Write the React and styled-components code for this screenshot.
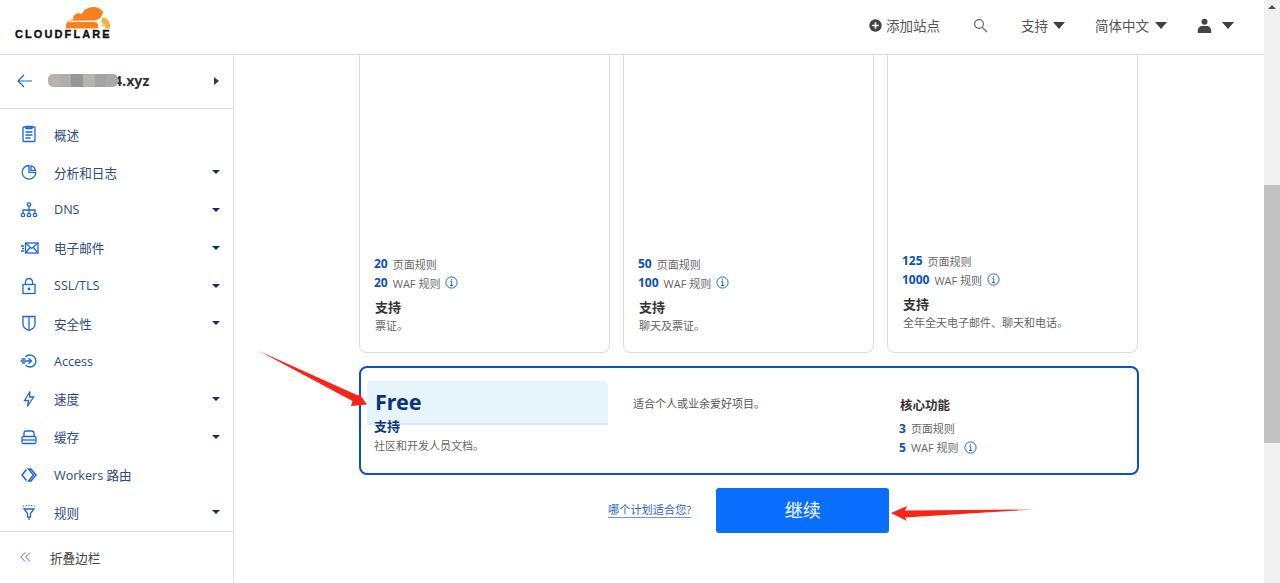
import React from 'react';
import styled, { createGlobalStyle } from 'styled-components';

const GlobalStyle = createGlobalStyle`
  html, body, #root {
    height: 100%;
    margin: 0;
  }
  body {
    overflow: hidden;
    background: #fff;
    font-family: "Open Sans", "Noto Sans CJK SC", sans-serif;
    color: #36393a;
  }
`;

const Page = styled.div`
  display: flex;
  height: 583px;
  position: relative;
  overflow: hidden;
`;

const Content = styled.div`
  flex: 1;
  min-width: 0;
  display: flex;
  flex-direction: column;
`;

const Scrollbar = styled.div`
  width: 16px;
  background: #f1f1f1;
  padding-top: 185px;
  position: relative;

  &::before {
    content: '';
    position: absolute;
    top: 5px;
    left: 4px;
    border-left: 4px solid transparent;
    border-right: 4px solid transparent;
    border-bottom: 4px solid #505050;
  }

  div {
    height: 258px;
    background: #c1c1c1;
  }
`;

const Header = styled.header`
  height: 54px;
  flex: none;
  border-bottom: 1px solid #e2e2e2;
  display: flex;
  align-items: center;
  justify-content: space-between;
  padding: 0 30px 0 15px;
`;

const Logo = styled.div`
  display: flex;
  flex-direction: column;
  align-items: flex-start;
  width: 96px;
  margin-top: -8px;

  svg {
    margin-left: 50px;
    margin-bottom: 0;
  }

  span {
    font-family: "Liberation Sans", sans-serif;
    font-size: 11px;
    line-height: 11px;
    font-weight: 700;
    letter-spacing: 2.1px;
    color: #111;
    white-space: nowrap;
    -webkit-text-stroke: 0.35px #111;
  }
`;

const HeaderNav = styled.nav`
  display: flex;
  align-items: center;
  font-size: 13.5px;
  color: #555;
  padding-bottom: 4px;
`;

const HeaderItem = styled.div`
  display: flex;
  align-items: center;
  gap: ${({ $gap }) => $gap ?? 4}px;
  margin-left: ${({ $left }) => $left ?? 0}px;
  white-space: nowrap;
`;

const Caret = styled.i`
  display: block;
  border-left: 6px solid transparent;
  border-right: 6px solid transparent;
  border-top: 7px solid #404040;
`;

const Body = styled.div`
  flex: 1;
  display: flex;
  min-height: 0;
`;

const Sidebar = styled.aside`
  width: 234px;
  flex: none;
  border-right: 1px solid #e2e2e2;
  box-sizing: border-box;
  display: flex;
  flex-direction: column;
`;

const DomainRow = styled.div`
  height: 54px;
  flex: none;
  box-sizing: border-box;
  border-bottom: 1px solid #e2e2e2;
  display: flex;
  align-items: center;
  padding: 0 14px 2px 17px;
`;

const Blurred = styled.div`
  display: flex;
  width: 70px;
  height: 13px;
  margin-left: 15px;
  margin-right: -4px;
  border-radius: 5px;
  overflow: hidden;
  filter: blur(0.7px);
  position: relative;
  z-index: 1;
`;

const BlurCell = styled.b`
  flex: 1;
  background: ${({ $c }) => $c};
`;

const DomainName = styled.span`
  flex: 1;
  font-size: 14.2px;
  font-weight: 700;
  color: #333;
`;

const SmallArrow = styled.i`
  display: block;
  border-top: 4px solid transparent;
  border-bottom: 4px solid transparent;
  border-left: 5px solid #3a3a3a;
`;

const NavList = styled.nav`
  flex: 1;
  padding-top: 6.5px;
`;

const NavItem = styled.div`
  height: 37.8px;
  display: flex;
  align-items: center;
  padding: 0 13px 0 20px;
  font-size: 12.6px;
  color: #2e4a7d;

  svg {
    flex: none;
  }
`;

const NavIconSlot = styled.span`
  width: 34px;
  flex: none;
  display: flex;
  justify-content: flex-start;
`;

const NavLabel = styled.span`
  flex: 1;
  white-space: nowrap;
`;

const NavCaret = styled.i`
  display: block;
  border-left: 4px solid transparent;
  border-right: 4px solid transparent;
  border-top: 4px solid #0f2d66;
`;

const CollapseRow = styled.div`
  height: 52px;
  flex: none;
  box-sizing: border-box;
  border-top: 1px solid #e2e2e2;
  display: flex;
  align-items: center;
  padding: 0 0 1px 20px;
  gap: 19px;
  font-size: 12.6px;
  color: #444;
`;

const Main = styled.main`
  flex: 1;
  padding-left: 125px;
  display: flex;
  flex-direction: column;
`;

const Plans = styled.div`
  display: grid;
  grid-template-columns: repeat(3, 251px);
  gap: 13px;
  height: 298px;
  flex: none;
`;

const PlanCard = styled.div`
  box-sizing: border-box;
  border: 1px solid #dcdcdc;
  border-top: none;
  border-radius: 0 0 8px 8px;
  padding: 0 15px ${({ $bottom }) => $bottom}px;
  display: flex;
  flex-direction: column;
  justify-content: flex-end;
`;

const Limit = styled.div`
  display: flex;
  align-items: center;
  height: 19px;
  font-size: 11px;
  color: #666;
  white-space: nowrap;

  b {
    color: #0b4fb5;
    font-size: 12px;
    font-weight: 700;
    margin: 0 5px 0 -1px;
  }

  svg {
    margin-left: 5px;
  }
`;

const SupportTitle = styled.div`
  font-size: 13px;
  line-height: 18px;
  font-weight: 700;
  color: #333;
  margin-top: 6px;
`;

const SupportText = styled.div`
  font-size: 11px;
  line-height: 16px;
  color: #666;
  margin-top: 2px;
`;

const FreeCard = styled.div`
  box-sizing: border-box;
  width: 780px;
  height: 109px;
  flex: none;
  margin-top: 12.5px;
  border: 2px solid #0a52bf;
  border-radius: 8px;
  padding: 13px 0 0 6px;
  display: grid;
  grid-template-columns: 241px 267px 1fr;
  column-gap: 25px;
`;

const FreeHead = styled.div`
  height: 44px;
  box-sizing: border-box;
  background: #e6f4fb;
  border-bottom: 2px solid #dbeafa;
  border-radius: 4px 4px 0 0;
  padding-left: 8px;
  font-size: 21.5px;
  line-height: 42px;
  font-weight: 700;
  color: #0d3478;
  font-family: "Noto Sans", "Noto Sans CJK SC", sans-serif;
`;

const FreeBlurb = styled.div`
  font-size: 11px;
  line-height: 16px;
  color: #555;
  padding-top: 15px;
`;

const FreeSupport = styled.div`
  padding-left: 7px;

  ${SupportTitle} {
    color: #0d3478;
    margin-top: -8px;
  }

  ${SupportText} {
    margin-top: 3px;
  }
`;

const FreeCore = styled.div`
  padding-top: 16px;
  margin-left: -25px;
  display: flex;
  flex-direction: column;
`;

const CoreTitle = styled.div`
  font-size: 12.5px;
  line-height: 18px;
  font-weight: 700;
  color: #333;
  margin-bottom: 4px;
`;

const Actions = styled.div`
  display: flex;
  align-items: center;
  margin-top: 13px;
  padding-left: 249px;
  gap: 25px;
`;

const HelpLink = styled.a`
  font-size: 11.2px;
  color: #2c64b8;
  text-decoration: none;
  border-bottom: 1px solid #6f97d6;
  line-height: 14px;
  white-space: nowrap;
  margin-top: 1px;
`;

const ContinueButton = styled.button`
  width: 173px;
  height: 45px;
  background: #0a6eff;
  border: none;
  border-radius: 3px;
  color: #fff;
  font-family: inherit;
  font-size: 18px;
  padding: 0 0 3px;
`;

const RedArrow = styled.svg`
  position: absolute;
  left: 0;
  top: 0;
  pointer-events: none;
`;

const Info = () => (
  <svg width="13" height="13" viewBox="0 0 13 13" fill="none" stroke="#1f66c9" strokeWidth="1">
    <circle cx="6.5" cy="6.5" r="5.6" />
    <path d="M5.3 5.6h1.4v3.8M5 9.5h3.2M6.5 3.2v1.3" />
  </svg>
);

const CloudLogo = () => (
  <svg width="46" height="22" viewBox="3.5 0 42.5 21.5" preserveAspectRatio="none">
    <path
      fill="#f6821f"
      d="M33.5 21 34 19.4c.4-1.3.2-2.5-.5-3.4-.6-.8-1.7-1.3-3-1.4L6 14.3c-.2 0-.3-.1-.4-.2-.1-.1-.1-.2 0-.4.1-.2.2-.3.4-.3l24.7-.3c2.9-.1 6-2.5 7.1-5.4l.9-2.4c0-.1.1-.2 0-.3C37.1 1.9 33.3 0 29.5 0c-4.8 0-9 2.9-10.5 7.2-1-.7-2.2-1.1-3.6-1-2.3.2-4.2 2.1-4.4 4.4-.1.6 0 1.2.1 1.7C7.4 12.4 4.2 15.6 4.2 19.6c0 .4 0 .7.1 1.1 0 .2.2.3.3.3h28.5c.2 0 .3-.1.4 0z"
    />
    <path
      fill="#fbad41"
      d="M38.5 10c-.1 0-.3 0-.4 0-.1 0-.2.1-.2.2l-.6 2.1c-.4 1.3-.2 2.5.5 3.4.6.8 1.7 1.3 3 1.4l-3.6.3c-.2 0-.3.1-.4.2-.1.1-.1.3 0 .4.1.2.2.3.4.3l3.8.3c-.6 1.1-.5 1.7-.8 2.4h4.5c.1 0 .3-.1.3-.2.2-.7.3-1.4.3-2.2 0-4.6-3.7-8.4-6.8-8.4z"
    />
  </svg>
);

const PlusCircle = () => (
  <svg width="13" height="13" viewBox="0 0 13 13">
    <circle cx="6.5" cy="6.5" r="6.2" fill="#444" />
    <path d="M6.5 3.2v6.6M3.2 6.5h6.6" stroke="#fff" strokeWidth="1.6" />
  </svg>
);

const SearchIcon = () => (
  <svg width="15" height="15" viewBox="0 0 15 15" fill="none" stroke="#666" strokeWidth="1.2">
    <circle cx="6" cy="6" r="4.4" />
    <path d="M9.3 9.3 14 14" />
  </svg>
);

const UserIcon = () => (
  <svg width="15" height="15" viewBox="0 0 15 15" fill="#444">
    <circle cx="7.5" cy="3.7" r="3" />
    <path d="M.8 15v-2.5C.8 9.8 3 8 5.3 8h4.400c2.300 0 4.500 1.800 4.500 4.500V15z" />
  </svg>
);

const BackIcon = () => (
  <svg width="16" height="14" viewBox="0 0 16 14" fill="none" stroke="#1d62cc" strokeWidth="1.2">
    <path d="M15 7H1M7 1 1 7l6 6" />
  </svg>
);

const iconProps = { width: 18, height: 18, viewBox: '0 0 18 18', fill: 'none', stroke: '#1f66d1', strokeWidth: 1.3 };

const icons = {
  overview: (
    <svg {...iconProps}>
      <rect x="3" y="2" width="12" height="14.5" rx="1" />
      <path d="M6 1.500h6v2H6zM5.500 7h7M5.500 10h7M5.500 13h5" />
    </svg>
  ),
  analytics: (
    <svg {...iconProps}>
      <path d="M9 2.500A6.800 6.800 0 1 0 15.800 9.300H9z" />
      <path d="M11 2.800A6 6 0 0 1 15.500 7.300H11z" />
    </svg>
  ),
  dns: (
    <svg {...iconProps}>
      <circle cx="9" cy="3.5" r="1.7" />
      <circle cx="3" cy="14" r="1.7" />
      <circle cx="9" cy="14" r="1.7" />
      <circle cx="15" cy="14" r="1.7" />
      <path d="M9 5.200v7M3 12.300V9h12v3.300" />
    </svg>
  ),
  email: (
    <svg {...iconProps} width="19">
      <rect x="5" y="4" width="12.5" height="10" />
      <path d="m5 4 6.250 5.500L17.500 4M5 14l4.500-5.500M17.500 14 13 8.500M.5 7H3.500M1.500 9.500h2M.5 12h3" />
    </svg>
  ),
  lock: (
    <svg {...iconProps}>
      <rect x="3" y="7.5" width="12" height="9" />
      <path d="M5.500 7.500V5a3.500 3.500 0 0 1 7 0v2.500" />
      <circle cx="9" cy="12" r="0.8" fill="#1f66d1" />
    </svg>
  ),
  shield: (
    <svg {...iconProps}>
      <path d="M3 2.500h12V10c0 3-3 5.500-6 6.500-3-1-6-3.500-6-6.500z" />
      <path d="M9 2.500v14" />
    </svg>
  ),
  access: (
    <svg {...iconProps}>
      <path d="M5.500 5A6 6 0 1 1 5.500 13" />
      <path d="M.5 9h11M8.500 6.300 11.500 9 8.500 11.700M1.500 7h4M2 11h3" />
    </svg>
  ),
  speed: (
    <svg {...iconProps}>
      <path d="M10 1.500 4.500 10.500h4L7.500 16.500l6-9.500H9.500z" />
    </svg>
  ),
  cache: (
    <svg {...iconProps}>
      <path d="M4 8.500V5.200C4 4 5 3 6.200 3h5.600C13 3 14 4 14 5.200v3.300" />
      <rect x="2" y="8.5" width="14" height="7" rx="1.5" />
      <path d="M2 12h14" />
    </svg>
  ),
  workers: (
    <svg {...iconProps} strokeWidth="1.5">
      <path d="M6.500 3.500 2 9l4.500 5.500M8.500 3h2.500L16 9l-5 6H8.500l5-6z" />
    </svg>
  ),
  rules: (
    <svg {...iconProps}>
      <path d="M4 6h10l-3.500 4.500V14h-3v-3.500z" />
      <path d="M3.500 2.500v1M6.300 2v1M9 2v1M11.700 2v1M14.500 2.500v1M9 15v2" />
    </svg>
  ),
};

const navItems = [
  { icon: 'overview', label: '概述' },
  { icon: 'analytics', label: '分析和日志', caret: true },
  { icon: 'dns', label: 'DNS', caret: true },
  { icon: 'email', label: '电子邮件', caret: true },
  { icon: 'lock', label: 'SSL/TLS', caret: true },
  { icon: 'shield', label: '安全性', caret: true },
  { icon: 'access', label: 'Access' },
  { icon: 'speed', label: '速度', caret: true },
  { icon: 'cache', label: '缓存', caret: true },
  { icon: 'workers', label: 'Workers 路由' },
  { icon: 'rules', label: '规则', caret: true },
];

const plans = [
  { pages: 20, waf: 20, support: '票证。', bottom: 18 },
  { pages: 50, waf: 100, support: '聊天及票证。', bottom: 18 },
  { pages: 125, waf: 1000, support: '全年全天电子邮件、聊天和电话。', bottom: 21 },
];

const blur = ['#b7b2ae', '#aeaeae', '#979797', '#b6b4b0', '#a3a3a3', '#a9a9a9'];

export default function App() {
  return (
    <Page>
      <GlobalStyle />
      <Content>
        <Header>
          <Logo>
            <CloudLogo />
            <span>CLOUDFLARE</span>
          </Logo>
          <HeaderNav>
            <HeaderItem>
              <PlusCircle />
              添加站点
            </HeaderItem>
            <HeaderItem $left={33}>
              <SearchIcon />
            </HeaderItem>
            <HeaderItem $left={33} $gap={5}>
              支持
              <Caret />
            </HeaderItem>
            <HeaderItem $left={30} $gap={6}>
              简体中文
              <Caret />
            </HeaderItem>
            <HeaderItem $left={30} $gap={10}>
              <UserIcon />
              <Caret />
            </HeaderItem>
          </HeaderNav>
        </Header>
        <Body>
          <Sidebar>
            <DomainRow>
              <BackIcon />
              <Blurred>
                {blur.map((c, i) => (
                  <BlurCell key={i} $c={c} />
                ))}
              </Blurred>
              <DomainName>4.xyz</DomainName>
              <SmallArrow />
            </DomainRow>
            <NavList>
              {navItems.map((item) => (
                <NavItem key={item.label}>
                  <NavIconSlot>{icons[item.icon]}</NavIconSlot>
                  <NavLabel>{item.label}</NavLabel>
                  {item.caret && <NavCaret />}
                </NavItem>
              ))}
            </NavList>
            <CollapseRow>
              <svg width="11" height="10" viewBox="0 0 11 10" fill="none" stroke="#3d74cf" strokeWidth="1">
                <path d="M5 .5.800 5 5 9.500M10 .5 5.800 5 10 9.500" />
              </svg>
              折叠边栏
            </CollapseRow>
          </Sidebar>
          <Main>
            <Plans>
              {plans.map((plan) => (
                <PlanCard key={plan.pages} $bottom={plan.bottom}>
                  <Limit>
                    <b>{plan.pages}</b>页面规则
                  </Limit>
                  <Limit>
                    <b>{plan.waf}</b>WAF 规则
                    <Info />
                  </Limit>
                  <SupportTitle>支持</SupportTitle>
                  <SupportText>{plan.support}</SupportText>
                </PlanCard>
              ))}
            </Plans>
            <FreeCard>
              <div>
                <FreeHead>Free</FreeHead>
                <FreeSupport>
                  <SupportTitle>支持</SupportTitle>
                  <SupportText>社区和开发人员文档。</SupportText>
                </FreeSupport>
              </div>
              <FreeBlurb>适合个人或业余爱好项目。</FreeBlurb>
              <FreeCore>
                <CoreTitle>核心功能</CoreTitle>
                <Limit>
                  <b>3</b>页面规则
                </Limit>
                <Limit>
                  <b>5</b>WAF 规则
                  <Info />
                </Limit>
              </FreeCore>
            </FreeCard>
            <Actions>
              <HelpLink>哪个计划适合您?</HelpLink>
              <ContinueButton>继续</ContinueButton>
            </Actions>
          </Main>
        </Body>
      </Content>
      <Scrollbar>
        <div />
      </Scrollbar>
      <RedArrow width="1280" height="583" viewBox="0 0 1280 583">
        <path fill="#f6241b" d="M259 351 358 395.500 359.500 394 367 404.500 351 406 352.500 401z" />
        <path fill="#f6241b" d="M891 513 907 506 905 510.500 1034 509.500 905 517.500 907 521z" />
      </RedArrow>
    </Page>
  );
}
